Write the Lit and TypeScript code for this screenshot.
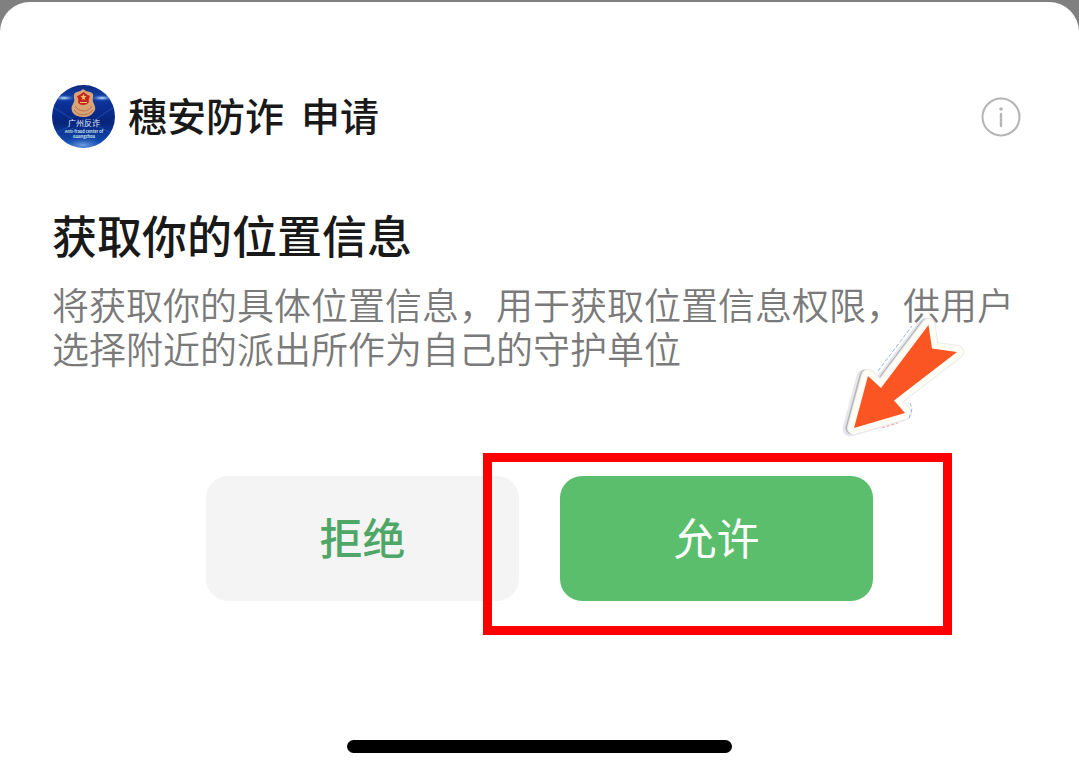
import { LitElement, html, css } from "lit";
import { customElement } from "lit/decorators.js";

@customElement("app-root")
export class AppRoot extends LitElement {
  static styles = css`
    :host {
      display: block;
      min-height: 100vh;
      background: #808080;
      font-family: "Noto Sans CJK SC", sans-serif;
      padding-top: 2px;
      box-sizing: border-box;
    }
    .sheet {
      box-sizing: border-box;
      min-height: calc(100vh - 2px);
      display: flex;
      flex-direction: column;
      padding: 83px 52px 20px;
      border-radius: 30px 30px 0 0;
      background: #fff;
    }
    .header {
      display: flex;
      align-items: center;
      gap: 13px;
      margin-bottom: 57px;
    }
    .logo {
      width: 63px;
      height: 63px;
      flex: none;
    }
    .app {
      flex: 1;
      display: flex;
      gap: 17px;
      padding-bottom: 6px;
      font-size: 39px;
      line-height: 56px;
      font-weight: 500;
      color: #191919;
    }
    .info {
      appearance: none;
      border: 0;
      padding: 0;
      margin-right: 6px;
      width: 40px;
      height: 40px;
      background: none;
    }
    .info svg {
      display: block;
    }
    h1 {
      margin: 0 0 17px;
      font-size: 45px;
      line-height: 60px;
      font-weight: 500;
      color: #191919;
    }
    .desc {
      margin: 0 -8px 0 0;
      font-size: 37px;
      line-height: 44px;
      font-weight: 350;
      color: #7a7a7a;
    }
    .actions {
      display: flex;
      justify-content: center;
      gap: 41px;
      margin: 106px 0 64px;
    }
    .slot {
      position: relative;
      flex: 0 1 313px;
    }
    .btn {
      display: block;
      width: 100%;
      border: 0;
      border-radius: 22px;
      padding: 30px 0 34px;
      font-family: inherit;
      font-size: 43px;
      line-height: 61px;
      font-weight: 500;
    }
    .reject {
      background: #f4f4f4;
      color: #4fa767;
    }
    .allow {
      background: #5bbe6d;
      color: #fff;
      font-weight: 400;
    }
    .frame {
      position: absolute;
      inset: -23px -79px -34px -77px;
      border: 9px solid #f00;
      pointer-events: none;
    }
    .arrow {
      position: absolute;
      left: 270px;
      bottom: 151px;
      width: 140px;
      height: 140px;
      pointer-events: none;
    }
    .home {
      width: 385px;
      max-width: 60%;
      height: 13px;
      margin: auto auto 0;
      border-radius: 7px;
      background: #000;
    }
  `;

  private logo() {
    return html`<svg class="logo" viewBox="0 0 63 63" role="img" aria-label="广州反诈">
      <defs>
        <linearGradient id="sky" x1="0" y1="0" x2="0" y2="1">
          <stop offset="0" stop-color="#0a2880" />
          <stop offset="0.18" stop-color="#1340a4" />
          <stop offset="0.3" stop-color="#0b3197" />
          <stop offset="0.6" stop-color="#08257c" />
          <stop offset="1" stop-color="#1656c0" />
        </linearGradient>
        <radialGradient id="glow">
          <stop offset="0" stop-color="#d4ecff" />
          <stop offset="1" stop-color="#3979e0" stop-opacity="0" />
        </radialGradient>
        <clipPath id="disc"><circle cx="31.5" cy="31.5" r="31.5" /></clipPath>
      </defs>
      <g clip-path="url(#disc)">
        <rect width="63" height="63" fill="url(#sky)" />
        <ellipse cx="12" cy="13" rx="11" ry="3" fill="url(#glow)" />
        <ellipse cx="50" cy="13" rx="11" ry="3" fill="url(#glow)" />
        <ellipse cx="31" cy="60" rx="22" ry="8" fill="url(#glow)" opacity="0.5" />
        <path d="M1 22L20 34M62 22L44 34M4 48L18 41M59 48L46 41" stroke="#2a62cc" stroke-width="1" opacity="0.6" />
      </g>
      <path d="M22 12Q21 8 25 7Q28 7 31 4Q34 7 38 7Q42 8 41 12Q40 16 42 19Q45 24 41 28Q38 32 32 32Q24 32 21 28Q18 23 21 19Q23 16 22 12Z" fill="#d8a477" />
      <path d="M25 11Q28 10 31.500 7Q35 10 38 11Q36 15 37 17Q35 20 31 20Q27 20 26 17Q27 15 25 11Z" fill="#c32620" />
      <path d="M31.500 9l1 2h2l-2 2 1 2-2-1-2 1 1-2-2-2h2zM28 17h7v1h-7z" fill="#f3c565" />
      <path d="M23 21Q26 26 31 26Q37 26 40 21M22 25Q26 30 31 30Q37 30 41 25" fill="none" stroke="#a8683f" stroke-width="0.800" />
      <text x="32" y="41" text-anchor="middle" font-size="8" fill="#e2edff">广州反诈</text>
      <text x="32" y="48" text-anchor="middle" font-size="4" font-weight="700" fill="#c3e0e8">Anti-fraud center of</text>
      <text x="32" y="53" text-anchor="middle" font-size="4" font-weight="700" fill="#c3e0e8">Guangzhou</text>
    </svg>`;
  }

  private arrow() {
    const shape = "M98.500 15L102 38.500L127 42L64 90.500L75 103L24 118L38 66L51 78Z";
    return html`<svg class="arrow" viewBox="0 0 140 140" aria-hidden="true">
      <g stroke-linejoin="round">
        <path d=${shape} transform="translate(-4 1)" fill="#e6e7ec" stroke="#e6e7ec" stroke-width="15" />
        <path d=${shape} transform="translate(-2 0)" fill="#b5b5b5" stroke="#b5b5b5" stroke-width="13" />
        <path d=${shape} fill="#e9e9ea" stroke="#e9e9ea" stroke-width="14" />
        <path d=${shape} fill="#fffef6" stroke="#fffef6" stroke-width="12" />
      </g>
      <path d=${shape} fill="#fa5523" />
      <path d="M48 61L82 16M80 93l2 6-3 9" fill="none" stroke="#6c91df" stroke-width="0.700" stroke-dasharray="4 2" />
      <path d="M52 118l16-5" stroke="#ef7a65" stroke-width="0.700" stroke-dasharray="3 2" />
    </svg>`;
  }

  render() {
    return html`<main class="sheet">
      <header class="header">
        ${this.logo()}
        <div class="app"><span>穗安防诈</span><span>申请</span></div>
        <button class="info" type="button" aria-label="详情">
          <svg width="40" height="40" viewBox="0 0 40 40">
            <circle cx="20" cy="20" r="18.500" fill="none" stroke="#b5b5b5" stroke-width="2" />
            <circle cx="20" cy="12" r="1.800" fill="#b5b5b5" />
            <path d="M20 17V29" stroke="#b5b5b5" stroke-width="2.400" stroke-linecap="round" />
          </svg>
        </button>
      </header>
      <h1>获取你的位置信息</h1>
      <p class="desc">将获取你的具体位置信息，用于获取位置信息权限，供用户选择附近的派出所作为自己的守护单位</p>
      <div class="actions">
        <div class="slot"><button class="btn reject" type="button">拒绝</button></div>
        <div class="slot">
          <button class="btn allow" type="button">允许</button>
          <div class="frame"></div>
          ${this.arrow()}
        </div>
      </div>
      <div class="home"></div>
    </main>`;
  }
}
